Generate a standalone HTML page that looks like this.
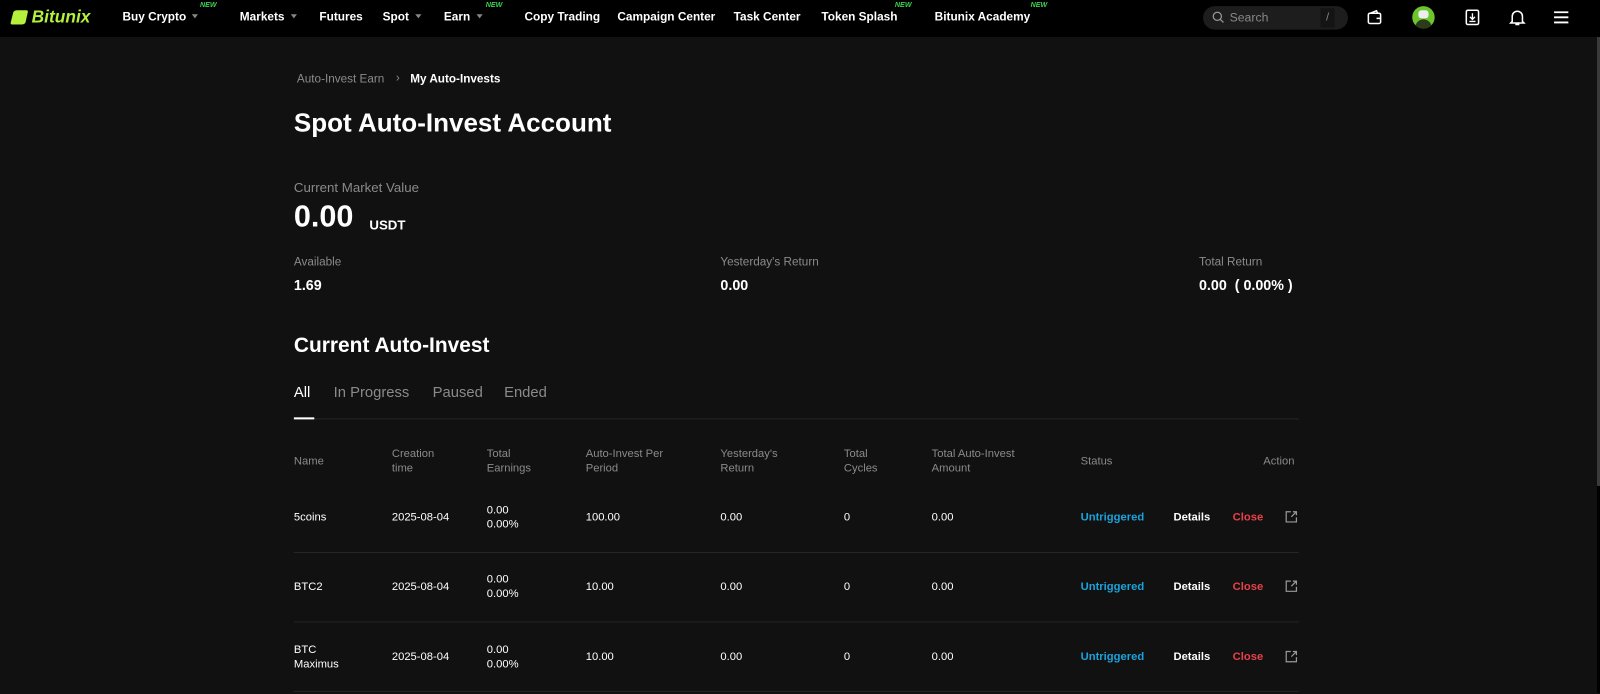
<!DOCTYPE html>
<html><head><meta charset="utf-8"><style>
*{margin:0;padding:0;box-sizing:border-box}
body{width:1600px;height:693px;background:#111;font-family:"Liberation Sans",sans-serif;color:#fff;position:relative;overflow:hidden}
#w{position:absolute;left:0;top:0;width:1568px;height:680px;transform:scale(1.0204);transform-origin:0 0}
.hdr{position:absolute;left:0;top:0;width:1600px;height:37px;background:#000}
.a{position:absolute;white-space:nowrap}
.nav{font-size:11.6px;font-weight:bold;color:#fff;top:10px}
.new{font-size:7px;font-style:italic;font-weight:bold;color:#3fd14f;top:2px}
.car{display:inline-block;width:0;height:0;border-left:3.5px solid transparent;border-right:3.5px solid transparent;border-top:4px solid #888;margin-left:6px;vertical-align:2px}
.g{color:#8a8a8a}
.th{font-size:11px;color:#8a8a8a;line-height:14px}
.td{font-size:11px;color:#fff;line-height:14px}
.line{position:absolute;left:288px;width:985px;height:1px;background:#262626}
</style></head><body>
<div class="hdr"></div>
<div id="w">
<svg class="a" style="left:9px;top:9px" width="20" height="16" viewBox="0 0 20 16"><path d="M4 3 Q5 1 8 1 L17 1 Q19 1 18 4 L16 13 Q15 15 12 15 L3 15 Q1 15 1.5 13 Z" fill="#b4f03c"/></svg>
<div class="a" style="left:31px;top:7px;font-size:17px;font-weight:bold;font-style:italic;color:#b4f03c">Bitunix</div>
<div class="a nav" style="left:120px">Buy Crypto<span class="car"></span></div>
<div class="a new" style="left:196px">NEW</div>
<div class="a nav" style="left:235px">Markets<span class="car"></span></div>
<div class="a nav" style="left:313px">Futures</div>
<div class="a nav" style="left:375px">Spot<span class="car"></span></div>
<div class="a nav" style="left:435px">Earn<span class="car"></span></div>
<div class="a new" style="left:476px">NEW</div>
<div class="a nav" style="left:514px">Copy Trading</div>
<div class="a nav" style="left:605px">Campaign Center</div>
<div class="a nav" style="left:719px">Task Center</div>
<div class="a nav" style="left:805px">Token Splash</div>
<div class="a new" style="left:877px">NEW</div>
<div class="a nav" style="left:916px">Bitunix Academy</div>
<div class="a new" style="left:1010px">NEW</div>
<div class="a" style="left:1179px;top:6px;width:142px;height:23px;border-radius:12px;background:#1d1d1d"></div>
<svg class="a" style="left:1188px;top:11px" width="12" height="12" viewBox="0 0 12 12"><circle cx="5" cy="5" r="4" stroke="#999" fill="none" stroke-width="1.2"/><path d="M8 8 L11 11" stroke="#999" stroke-width="1.2"/></svg>
<div class="a" style="left:1205px;top:10px;font-size:12px;color:#888">Search</div>
<div class="a" style="left:1294px;top:8px;width:14px;height:19px;background:#141414;font-size:11px;color:#888;text-align:center;line-height:19px">/</div>
<svg class="a" style="left:1339px;top:9px" width="16" height="16" viewBox="0 0 16 16"><rect x="2" y="4" width="12" height="10" rx="1.5" stroke="#fff" fill="none" stroke-width="1.5"/><path d="M4 4 L10 1.5 L11 4" stroke="#fff" fill="none" stroke-width="1.5"/><path d="M10 9 H14" stroke="#fff" stroke-width="1.5"/></svg>
<div class="a" style="left:1384px;top:6px;width:22px;height:22px;border-radius:50%;background:#6cc52c;overflow:hidden"><div style="position:absolute;left:6px;top:4px;width:10px;height:8px;border-radius:3px;background:#eee"></div><div style="position:absolute;left:3px;top:13px;width:16px;height:10px;border-radius:8px 8px 0 0;background:#2a3a1a"></div></div>
<svg class="a" style="left:1435px;top:9px" width="16" height="16" viewBox="0 0 16 16"><rect x="2" y="1" width="12" height="14" rx="1.5" stroke="#fff" fill="none" stroke-width="1.5"/><path d="M8 4 V10 M5.5 7.5 L8 10 L10.5 7.5 M5 12 H11" stroke="#fff" fill="none" stroke-width="1.3"/></svg>
<svg class="a" style="left:1479px;top:8px" width="16" height="18" viewBox="0 0 16 18"><path d="M3 13 V8 A5 5 0 0 1 13 8 V13 L14.5 14.5 H1.5 Z M6 16 H10" stroke="#fff" fill="none" stroke-width="1.5"/></svg>
<svg class="a" style="left:1522px;top:10px" width="16" height="14" viewBox="0 0 16 14"><path d="M1 2 H15 M1 7 H15 M1 12 H15" stroke="#fff" stroke-width="1.8"/></svg>

<div class="a g" style="left:291px;top:72px;font-size:11.5px">Auto-Invest Earn</div>
<div class="a g" style="left:388px;top:71px;font-size:11.5px">›</div>
<div class="a" style="left:402px;top:72px;font-size:11.5px;font-weight:bold">My Auto-Invests</div>
<div class="a" style="left:288px;top:107px;font-size:25.5px;font-weight:bold">Spot Auto-Invest Account</div>
<div class="a g" style="left:288px;top:176px;font-size:13px">Current Market Value</div>
<div class="a" style="left:288px;top:196px;font-size:30px;font-weight:bold">0.00</div>
<div class="a" style="left:362px;top:213px;font-size:13px;font-weight:bold">USDT</div>
<div class="a g" style="left:288px;top:251px;font-size:11.5px">Available</div>
<div class="a" style="left:288px;top:271px;font-size:14px;font-weight:bold">1.69</div>
<div class="a g" style="left:706px;top:251px;font-size:11.5px">Yesterday's Return</div>
<div class="a" style="left:706px;top:271px;font-size:14px;font-weight:bold">0.00</div>
<div class="a g" style="left:1175px;top:251px;font-size:11.5px">Total Return</div>
<div class="a" style="left:1175px;top:271px;font-size:14px;font-weight:bold">0.00 &nbsp;( 0.00% )</div>
<div class="a" style="left:288px;top:327px;font-size:20.5px;font-weight:bold">Current Auto-Invest</div>
<div class="a" style="left:288px;top:377px;font-size:14.5px">All</div>
<div class="a g" style="left:327px;top:377px;font-size:14.5px">In Progress</div>
<div class="a g" style="left:424px;top:377px;font-size:14.5px">Paused</div>
<div class="a g" style="left:494px;top:377px;font-size:14.5px">Ended</div>
<div class="line" style="top:410px"></div>
<div class="a" style="left:288px;top:409px;width:20px;height:2px;background:#fff"></div>

<div class="a th" style="left:288px;top:445px">Name</div>
<div class="a th" style="left:384px;top:438px">Creation<br>time</div>
<div class="a th" style="left:477px;top:438px">Total<br>Earnings</div>
<div class="a th" style="left:574px;top:438px">Auto-Invest Per<br>Period</div>
<div class="a th" style="left:706px;top:438px">Yesterday's<br>Return</div>
<div class="a th" style="left:827px;top:438px">Total<br>Cycles</div>
<div class="a th" style="left:913px;top:438px">Total Auto-Invest<br>Amount</div>
<div class="a th" style="left:1059px;top:445px">Status</div>
<div class="a th" style="left:1238px;top:445px">Action</div>

<div class="a td" style="left:288px;top:500px">5coins</div>
<div class="a td" style="left:384px;top:500px">2025-08-04</div>
<div class="a td" style="left:477px;top:493px">0.00<br>0.00%</div>
<div class="a td" style="left:574px;top:500px">100.00</div>
<div class="a td" style="left:706px;top:500px">0.00</div>
<div class="a td" style="left:827px;top:500px">0</div>
<div class="a td" style="left:913px;top:500px">0.00</div>
<div class="a td" style="left:1059px;top:500px;color:#1aa3dc;font-weight:bold">Untriggered</div>
<div class="a td" style="left:1150px;top:500px;font-weight:bold">Details</div>
<div class="a td" style="left:1208px;top:500px;color:#e8414a;font-weight:bold">Close</div>
<div class="line" style="top:541px"></div>

<div class="a td" style="left:288px;top:568px">BTC2</div>
<div class="a td" style="left:384px;top:568px">2025-08-04</div>
<div class="a td" style="left:477px;top:561px">0.00<br>0.00%</div>
<div class="a td" style="left:574px;top:568px">10.00</div>
<div class="a td" style="left:706px;top:568px">0.00</div>
<div class="a td" style="left:827px;top:568px">0</div>
<div class="a td" style="left:913px;top:568px">0.00</div>
<div class="a td" style="left:1059px;top:568px;color:#1aa3dc;font-weight:bold">Untriggered</div>
<div class="a td" style="left:1150px;top:568px;font-weight:bold">Details</div>
<div class="a td" style="left:1208px;top:568px;color:#e8414a;font-weight:bold">Close</div>
<div class="line" style="top:609px"></div>

<div class="a td" style="left:288px;top:630px">BTC<br>Maximus</div>
<div class="a td" style="left:384px;top:637px">2025-08-04</div>
<div class="a td" style="left:477px;top:630px">0.00<br>0.00%</div>
<div class="a td" style="left:574px;top:637px">10.00</div>
<div class="a td" style="left:706px;top:637px">0.00</div>
<div class="a td" style="left:827px;top:637px">0</div>
<div class="a td" style="left:913px;top:637px">0.00</div>
<div class="a td" style="left:1059px;top:637px;color:#1aa3dc;font-weight:bold">Untriggered</div>
<div class="a td" style="left:1150px;top:637px;font-weight:bold">Details</div>
<div class="a td" style="left:1208px;top:637px;color:#e8414a;font-weight:bold">Close</div>
<div class="line" style="top:677px"></div>

<svg class="a" style="left:1259px;top:500px" width="13" height="13" viewBox="0 0 13 13"><path d="M6 1.5 H1.5 V11.5 H11.5 V7 M8 1.5 H11.5 V5 M11.5 1.5 L6.5 6.5" stroke="#999" fill="none" stroke-width="1.2"/></svg>
<svg class="a" style="left:1259px;top:568px" width="13" height="13" viewBox="0 0 13 13"><path d="M6 1.5 H1.5 V11.5 H11.5 V7 M8 1.5 H11.5 V5 M11.5 1.5 L6.5 6.5" stroke="#999" fill="none" stroke-width="1.2"/></svg>
<svg class="a" style="left:1259px;top:637px" width="13" height="13" viewBox="0 0 13 13"><path d="M6 1.5 H1.5 V11.5 H11.5 V7 M8 1.5 H11.5 V5 M11.5 1.5 L6.5 6.5" stroke="#999" fill="none" stroke-width="1.2"/></svg>
</div>
<div class="a" style="left:1597px;top:37px;width:3px;height:449px;background:#3a3a3a"></div>
<div class="a" style="left:1597px;top:486px;width:3px;height:207px;background:#000"></div>
</body></html>
